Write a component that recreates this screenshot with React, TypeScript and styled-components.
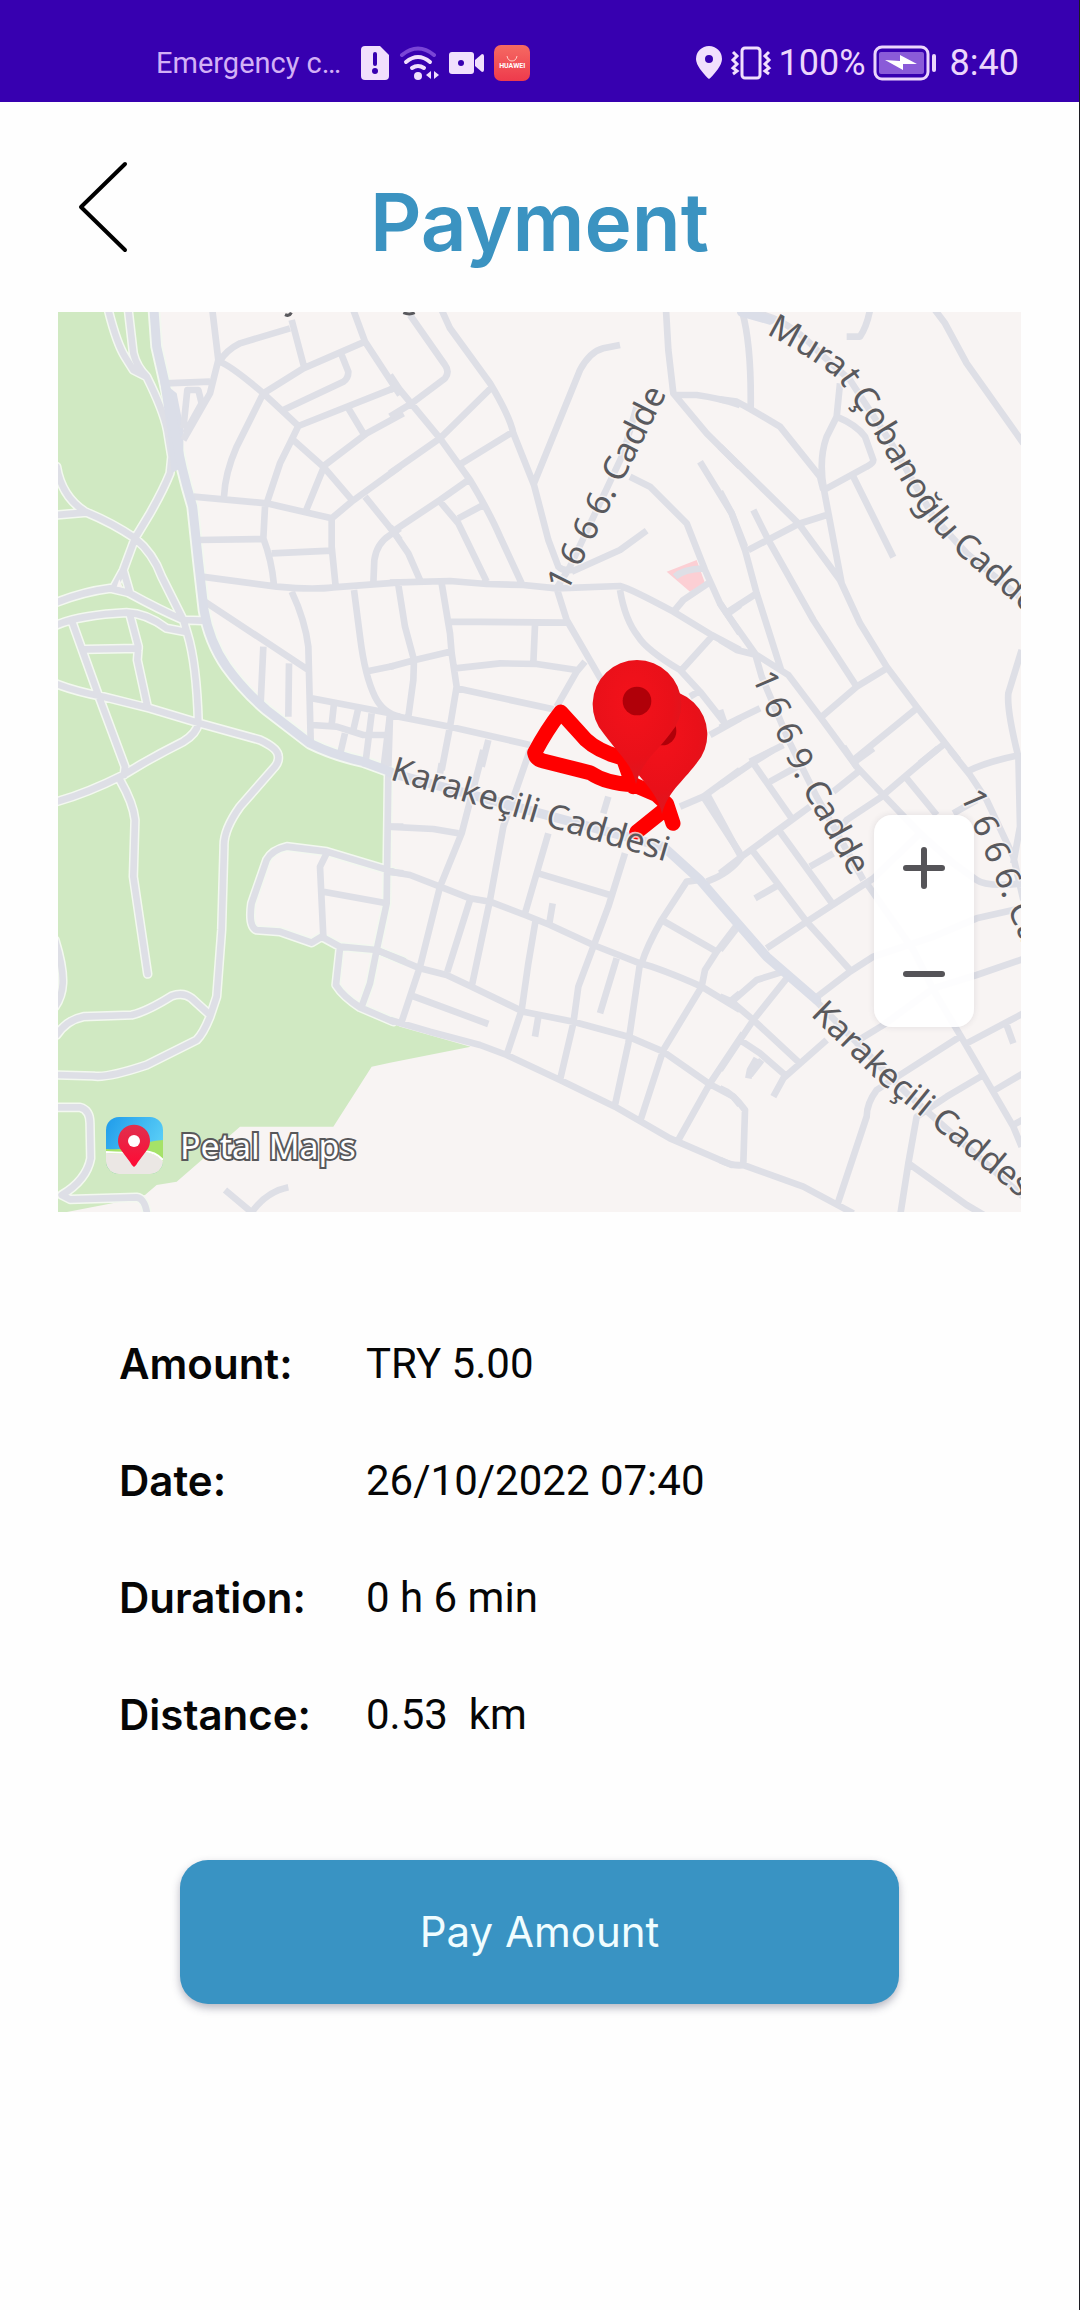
import React from "react";
import styled, { createGlobalStyle } from "styled-components";

const GlobalStyle = createGlobalStyle`
  *, *::before, *::after { box-sizing: border-box; }
  body {
    margin: 0;
    background: #fefefe;
    color: #060606;
    font-family: Roboto, "Noto Sans", "Liberation Sans", sans-serif;
  }
`;

const Screen = styled.div`
  min-height: 100vh;
  display: flex;
  flex-direction: column;
  border-right: 1px solid #1c1c22;
`;

const StatusBar = styled.div`
  display: flex;
  align-items: center;
  justify-content: space-between;
  height: 102px;
  padding: 24px 60px 0 156px;
  background: #3700b0;
  color: #ecd6fc;
`;

const StatusGroup = styled.div<{ $gap: number }>`
  display: flex;
  align-items: center;
  gap: ${(p) => p.$gap}px;
`;

const Carrier = styled.span`
  margin-right: 10px;
  font-size: 29px;
  line-height: 36px;
  color: #d3b0f6;
`;

const StatusText = styled.span`
  font-size: 36px;
  line-height: 40px;
`;

const Clock = styled(StatusText)`
  margin-left: 6px;
`;

const Header = styled.header`
  display: grid;
  grid-template-columns: 1fr auto 1fr;
  align-items: start;
  padding: 50px 60px 0;
  height: 210px;
`;

const BackButton = styled.button`
  justify-self: start;
  display: grid;
  place-items: center;
  width: 86px;
  height: 110px;
  padding: 0;
  border: 0;
  background: none;
  color: #000;
`;

const Title = styled.h1`
  margin: 20px 0 0;
  font-family: Inter, Roboto, sans-serif;
  font-size: 80px;
  line-height: 100px;
  font-weight: 600;
  color: #3b93c1;
`;

const MapPanel = styled.section`
  position: relative;
  height: 900px;
  margin: 0 58px;
  overflow: hidden;
  background: #f8f4f3;
`;

const MapCanvas = styled.svg`
  display: block;
  width: 100%;
  height: 100%;
`;

const ZoomControl = styled.div`
  position: absolute;
  right: 47px;
  bottom: 185px;
  display: flex;
  flex-direction: column;
  width: 100px;
  border-radius: 18px;
  background: rgba(255, 255, 255, 0.93);
  box-shadow: 0 0 6px rgba(60, 60, 80, 0.12);
`;

const ZoomButton = styled.button`
  display: grid;
  place-items: center;
  height: 106px;
  padding: 0;
  border: 0;
  background: none;
  color: #555458;
`;

const Attribution = styled.div`
  position: absolute;
  left: 48px;
  bottom: 38px;
  display: flex;
  align-items: center;
  gap: 17px;
  font-family: "Noto Sans", sans-serif;
  font-size: 34px;
  line-height: 40px;
  color: #fff;
  -webkit-text-stroke: 4px #58585a;
  paint-order: stroke fill;
`;

const Details = styled.dl`
  display: grid;
  grid-template-columns: 247px 1fr;
  row-gap: 67px;
  margin: 127px 60px 0 119px;
  font-size: 42px;
  line-height: 50px;
`;

const Term = styled.dt`
  font-family: Inter, Roboto, sans-serif;
  font-weight: 600;
`;

const Value = styled.dd`
  margin: 0;
  white-space: pre;
`;

const PayRow = styled.div`
  display: grid;
  padding: 120px 180px 0;
`;

const PayButton = styled.button`
  padding: 46px 24px;
  border: 0;
  border-radius: 28px;
  background: #3993c3;
  box-shadow: 0 4px 8px rgba(50, 50, 80, 0.35);
  color: #f0fdff;
  font-family: Inter, Roboto, sans-serif;
  font-size: 42px;
  line-height: 52px;
`;

type Streets = { x: number; y: number; d: string };

/* The canvas is cut into six tiles; each lists its streets from its own corner. */
const tiles: Streets[] = [
  {
    x: 150,
    y: 900,
    d: `M487,30L505,180L480,280L400,420M345,250L480,245M400,385L412,270L445,270L455,310L405,400
M720,85L570,130Q530,150 508,185M725,60L762,200M910,30L945,125L1050,285M945,125L760,205L640,280
M508,185Q540,195 640,280L710,345L745,378M875,165L895,215Q895,235 880,245L700,330M745,378L1030,265
M895,325L940,400M1060,340L950,400L825,495M745,378Q720,430 690,490L650,610
M640,280L560,440Q525,520 522,590M730,420L820,500L910,605M1050,500L905,605L845,655M820,505L768,632
M430,590L650,610L845,655L845,740L857,860M645,620L640,715Q665,780 672,855M445,720L640,717
M665,760L845,752M455,830L680,860Q790,870 850,862L1050,847M945,590L1050,720
M1050,685L1020,705Q980,730 973,780L970,850M725,875Q765,960 775,1040L782,1320M465,905L775,1110
M640,1040L632,1210M717,1090L715,1250M912,870L930,1010Q945,1130 975,1190Q1000,1240 1050,1250
M945,1115L1030,1098M785,1195L1020,1240M852,1210L845,1275M925,1225L910,1290M965,1240L945,1400
M1020,1245L1000,1410M785,1275L860,1280L940,1305L1015,1305M885,1300L872,1355`,
  },
  {
    x: 1170,
    y: 900,
    d: `M60,45L165,195Q180,215 165,235L65,310L0,350M155,30L180,85L300,250Q360,350 370,400L432,555L475,720L505,800Q520,815 545,810
M0,225L30,270L150,415L240,540Q300,640 330,710L395,850M0,270L15,262M305,262L150,415L0,520M370,395L215,490
M432,550L570,210Q600,155 640,145L690,135M235,540L150,600L15,690L0,690M150,605L205,670L290,845M205,655L280,615
M0,680L55,760L90,840M0,848L180,843L290,852L400,855L500,865L690,858Q720,865 850,935L965,1005L1050,1050
M500,865L540,800L700,460L740,320M545,815L590,795L690,750L770,692M720,530L780,560L890,670L945,810L990,910L1050,1000
M828,30L835,150L850,280L950,400L1050,500M850,285L920,285Q990,295 1050,315M930,485L1025,640L1065,740
M855,830Q880,808 940,805M955,850L880,900L855,930M1015,940L1050,915M25,855L45,980L72,1080L70,1140L55,1250
M155,850L180,1000L185,1060L200,1160L180,1280L155,1410M180,965L530,968M435,975L430,1090M0,1100L75,1080L180,1055
M195,1105L330,1090L440,1092L560,1110M500,865L530,960L640,1150M585,1085L560,1115L500,1220M200,1165L490,1228
M0,1245L180,1280L420,1335M295,1320L275,1400M690,870Q705,960 745,1010Q770,1050 870,1110L930,1175L1005,1270
M965,1010L870,1115M960,1305L1050,1255M900,1190L925,1175M0,1250L-5,1400`,
  },
  {
    x: 2160,
    y: 900,
    d: `M65,30Q95,130 92,330M90,36Q200,50 300,160L390,240L520,440L640,650L740,760L910,900M0,298L50,305Q90,325 180,380L300,530L310,570
M380,110L420,110Q440,80 450,30M645,30L675,70L740,190L910,430M360,250L350,350L320,410Q295,480 312,570L365,850
M350,350Q410,375 435,410L460,480Q460,490 440,500L315,568M400,530L520,772
M0,440L235,670L360,840L420,970L500,1100L590,1220L715,1380M320,645L235,672L85,750M100,630L145,720L280,960L410,1160
M0,575L35,640L75,750L110,880L185,1115M110,880L25,935M0,910L20,940L105,1060L125,1130L210,1330L290,1490L430,1740
M0,1020L50,1050L110,1065L205,1125L300,1250L410,1400M500,1105L410,1160L305,1250M590,1225L400,1380M675,1330L600,1390
M905,1050L865,1180Q860,1230 895,1370M0,1230L15,1275M0,1283L120,1225M90,1385L190,1335M740,1415Q800,1385 900,1365`,
  },
  {
    x: 150,
    y: 2250,
    d: `M830,310L810,350L820,560M820,425L1010,460M1020,230L1060,230M1010,365L1060,370M525,1320L605,1387Q650,1325 715,1312`,
  },
  {
    x: 1170,
    y: 2250,
    d: `M-10,230L130,237L205,250M280,0L215,250L150,410L90,650L35,815M420,0L340,230L300,450L245,710M155,40L150,70
M475,250L405,490M445,370L660,435M655,140L640,190M705,310L655,470L610,590L565,710L550,820L510,990
M-15,362L60,375L150,410L240,445L300,455L405,495L480,525L610,585L750,640Q810,655 935,710L1050,780
M240,450L172,665M488,460L478,520M437,510L415,640L395,780L350,915M680,625L630,790
M-40,600L90,655L170,675L245,710L400,785L550,815L715,860L820,905L955,1000L1030,1040L1050,1065
M60,735L295,822M445,800L435,860M0,810L120,845L270,885L350,915L510,990L675,1070L840,1165L1025,1245L1060,1245
M750,640L715,880L675,1065M930,390L890,395L815,510Q770,590 755,640M815,510L980,605
M1045,520L980,605L945,660L935,710L820,900L750,1115M1060,850L960,1000L865,1170M1020,755L1050,730
M870,170L940,140L1050,60M940,140L1050,310M950,395Q1020,370 1055,320`,
  },
  {
    x: 2160,
    y: 2250,
    d: `M370,-10L410,50L490,135L600,250L700,340L770,390Q800,412 910,400M0,105L95,40L160,0M100,40L215,205M150,95L240,45
M415,65L340,125M460,-5L405,35M485,140L380,210L340,260M0,370L65,320L215,210L270,170M-40,130L60,315
M100,305L260,515L395,665M180,245L340,465M270,350L340,310M105,445L175,405M490,135L560,75L655,-5
M560,85L650,195M690,0L750,75L800,150L880,320L910,450M895,10L900,230L880,340M700,190L770,150
M285,745L390,665L460,620L640,560L770,505L890,478M140,595L260,515L460,385L600,250M440,400L580,600L640,720L735,880L880,1130L905,1190
M910,627L770,675L640,715L490,825L400,880M910,790L740,880M860,825L880,880
M720,860L540,975L470,1020Q440,1060 440,1100L350,1370M790,975L680,1040L590,1100L565,1240L540,1400
M565,1240L740,1365L800,1400M825,1020L910,970M880,1125L910,1108M285,750L560,1030L910,1340
M50,535L0,600M190,665L110,690L35,755M200,685L100,810L0,960M0,740L35,755L100,810L240,940
M320,870L190,985L160,1040M60,870L120,910L195,975M0,1015Q40,1030 75,1080L70,1240
M0,1230Q40,1250 70,1245L250,1310L400,1390M110,925L90,960L85,985M125,930L90,975`,
  },
];

const parkPaths = `M175,30Q200,130 225,170L250,210L290,230Q340,330 352,390L365,470L360,520Q340,570 300,640L255,715L220,810L190,865
M235,30L250,160Q260,200 290,230M20,500Q35,590 105,635Q190,670 255,715Q310,760 335,830L400,960L412,1000Q440,1090 445,1270
M20,645L110,637M20,907Q100,875 180,865L235,878Q330,930 400,960L455,962M220,810L240,880
M20,975Q90,945 230,938Q290,940 350,985L405,995M68,970L145,1185L225,1400L222,1425M240,945L265,1040L262,1080L292,1218
M105,1048L265,1045M20,1152Q80,1175 160,1190L300,1225L450,1270L630,1320Q685,1345 685,1370Q687,1385 675,1400L570,1520
Q520,1590 522,1640L515,1890L500,2090L480,2150Q460,2200 440,2220L290,2295Q170,2335 130,2328L20,2325
M445,1270Q440,1300 400,1325Q330,1360 270,1395L220,1425Q110,1480 20,1505M210,1440Q250,1510 255,1560L250,1730L293,2022
M20,2205Q50,2160 100,2150L245,2145Q290,2135 365,2088Q400,2075 425,2095L480,2145
M15,1920Q40,2000 38,2050Q36,2090 15,2120M20,2422L90,2422Q120,2430 120,2470L122,2575Q110,2640 35,2685L60,2698L260,2692Q285,2695 292,2745
M1030,1715Q880,1670 830,1655L710,1640Q665,1650 650,1680L605,1810Q595,1880 620,1890L690,1895L785,1928L815,1910L870,1940L980,1950L1060,1982
M870,1945L858,2055Q880,2090 930,2122L1030,2165M1015,1430L1010,1810L980,1950L960,2050L935,2120`;

const mainRoad = `M312,30L320,140L345,250L378,410Q392,500 428,620L445,780L462,930Q478,1025 530,1100Q580,1170 650,1230
L780,1330Q850,1365 940,1385L1022,1415`;

const streetLabels = [
  { id: "murat", text: "Murat Çobanoğlu Caddesi", d: "M2298,1002Q2450,1080 2520,1145Q2580,1230 2640,1330L2730,1490Q2780,1570 2860,1650L3150,1900" },
  { id: "c1666", text: "1 6 6 6. Cadde", d: "M1700,1780L1890,1400L2040,1100" },
  { id: "c1669", text: "1 6 6 9. Cadde", d: "M2255,2030L2380,2320L2625,2760" },
  { id: "east", text: "1 6 6 6. Cadde", d: "M2880,2385L2946,2540L3120,2960" },
  { id: "kara1", text: "Karakeçili Caddesi", d: "M1168,2338L1600,2467L2050,2600" },
  { id: "kara2", text: "Karakeçili Caddesi", d: "M2430,3045L2640,3250L2800,3380L3200,3710" },
];

const pinShape =
  "M408,462C398,405 355,370 312,312A133,133 0 1 1 510,312C470,365 422,400 408,462Z";

function StreetMap() {
  return (
    <MapCanvas viewBox="174 936 2889 2700" preserveAspectRatio="xMinYMin slice" role="img" aria-label="Trip route">
      <defs>
        <radialGradient id="pin" cx="45%" cy="35%" r="75%">
          <stop offset="0" stopColor="#f4121b" />
          <stop offset="0.6" stopColor="#e91019" />
          <stop offset="1" stopColor="#d61a22" />
        </radialGradient>
        <path id="park-paths" d={parkPaths} />
        <path id="main-road" d={mainRoad} />
        {streetLabels.map((l) => (
          <path key={l.id} id={l.id} d={l.d} />
        ))}
      </defs>
      <rect x="174" y="936" width="2889" height="2700" fill="#f8f4f3" />
      <path
        fill="#d0e9c2"
        transform="translate(150 900)"
        d="M20,30H300L310,140L335,240L385,440L430,600L450,850L470,960L510,1080L590,1190L780,1330L1010,1430V1705L830,1655L710,1640L650,1680L605,1810L605,1880L690,1895L785,1928L815,1910L870,1940L858,2055L930,2122L1050,2180L1262,2240L1020,2288L965,2300L850,2480H570L380,2645L320,2655L285,2685L210,2705L20,2742Z"
      />
      <path fill="#fccfd4" d="M2000,1715L2090,1680L2115,1750L2070,1775Z" />
      <g fill="none" strokeLinecap="round" strokeLinejoin="round">
        <g transform="translate(150 900)" stroke="#f3f8f0">
          <use href="#park-paths" strokeWidth="29" />
          <use href="#main-road" strokeWidth="38" />
        </g>
        <g stroke="#dedfe6" strokeWidth="20">
          <g transform="translate(150 900)">
            <use href="#park-paths" />
            <path fill="#dbdee8" stroke="none" d="M330,240L380,280L400,380L400,500L365,520L352,390Z" />
            <path fill="#f8f4f3" stroke="none" d="M200,860L208,838L218,862Z" />
          </g>
          {tiles.map((t) => (
            <path key={`${t.x}-${t.y}`} transform={`translate(${t.x} ${t.y})`} d={t.d} strokeLinecap="butt" />
          ))}
        </g>
        <use href="#main-road" transform="translate(150 900)" stroke="#dbdee8" strokeWidth="27" />
        <path
          stroke="#dbdee8"
          strokeWidth="28"
          d="M1170,2318L1990,2540L2100,2640L2160,2710L2300,2870L2450,3000M2225,936L2310,960"
        />
        <g transform="translate(1500 1890)">
          <path
            stroke="#ff0000"
            strokeWidth="45"
            d="M400,470L370,385L330,372Q270,350 240,310L182,246Q140,300 104,368Q108,388 130,393L270,428Q320,462 400,464L470,494L500,522L519,580M490,542L410,606"
          />
        </g>
      </g>
      <g transform="translate(1500 1890)">
        <g transform="translate(78 90)">
          <path d={pinShape} fill="url(#pin)" />
          <circle cx="408" cy="213" r="43" fill="#b00009" />
        </g>
        <path d={pinShape} fill="url(#pin)" />
        <circle cx="411" cy="213" r="43" fill="#b00009" />
      </g>
      <g
        fill="#59595d"
        stroke="#f8f4f3"
        strokeWidth="10"
        strokeOpacity="0.75"
        strokeLinejoin="round"
        paintOrder="stroke"
        fontSize="102"
        fontFamily='"Noto Sans", "Open Sans", sans-serif'
      >
        {streetLabels.map((l) => (
          <text key={l.id}>
            <textPath href={`#${l.id}`}>{l.text}</textPath>
          </text>
        ))}
      </g>
      <path d="M855,944Q868,950 874,938M1210,938Q1228,946 1244,938" fill="none" stroke="#59595d" strokeWidth="9" />
    </MapCanvas>
  );
}

const details = [
  ["Amount:", "TRY 5.00"],
  ["Date:", "26/10/2022 07:40"],
  ["Duration:", "0 h 6 min"],
  ["Distance:", "0.53  km"],
];

function PetalLogo() {
  return (
    <svg width="57" height="57" viewBox="0 0 57 57" aria-hidden="true">
      <defs>
        <clipPath id="petal-clip">
          <rect width="57" height="57" rx="13" />
        </clipPath>
        <linearGradient id="petal-sky" x1="0" y1="0" x2="1" y2="0.6">
          <stop offset="0" stopColor="#1f9bea" />
          <stop offset="1" stopColor="#5fd3f8" />
        </linearGradient>
        <linearGradient id="petal-pin" x1="0" y1="0" x2="0" y2="1">
          <stop offset="0" stopColor="#e0304e" />
          <stop offset="1" stopColor="#ff0a34" />
        </linearGradient>
      </defs>
      <g clipPath="url(#petal-clip)">
        <rect width="57" height="57" fill="url(#petal-sky)" />
        <path d="M0,32Q16,33 28,30Q42,24 57,23V57H0Z" fill="#a5e268" />
        <path d="M0,36Q24,38 38,35Q50,36 57,44V57H0Z" fill="#ebe7e4" />
        <path d="M0,35Q24,37 38,34Q50,35 57,43" stroke="#fff" strokeWidth="2" fill="none" />
        <path d="M28,50Q26,49 24,45L15,33A16,16 0 1 1 41,33L32,45Q30,49 28,50Z" fill="url(#petal-pin)" />
        <circle cx="28" cy="24" r="6" fill="#fff" />
      </g>
    </svg>
  );
}

function SimAlertIcon() {
  return (
    <svg width="28" height="34" viewBox="0 0 28 34" aria-hidden="true">
      <path d="M4,0H19L28,9V30Q28,34 24,34H4Q0,34 0,30V4Q0,0 4,0Z" fill="#f1dffd" />
      <path d="M14,8V18" stroke="#3700b0" strokeWidth="4" strokeLinecap="round" />
      <circle cx="14" cy="25" r="3" fill="#3700b0" />
    </svg>
  );
}

function WifiIcon() {
  return (
    <svg width="40" height="34" viewBox="0 0 40 34" fill="none" strokeWidth="4" strokeLinecap="round" aria-hidden="true">
      <path d="M3,9Q19,-4 35,9" stroke="#7a45d6" />
      <path d="M7,16Q19,6 31,16" stroke="#f1dffd" />
      <path d="M13,22Q19,18 25,22" stroke="#f1dffd" />
      <circle cx="19" cy="30" r="4" fill="#f1dffd" />
      <path d="M32,25V33L27,29ZM35,25V33L40,29Z" fill="#f1dffd" />
    </svg>
  );
}

function CameraIcon() {
  return (
    <svg width="35" height="22" viewBox="0 0 35 22" aria-hidden="true">
      <rect width="25" height="22" rx="3" fill="#f1dffd" />
      <path d="M26,8L33,2Q35,2 35,4V18Q35,20 33,20L26,14Z" fill="#f1dffd" />
      <circle cx="12" cy="11" r="3" fill="#3700b0" />
    </svg>
  );
}

const StoreBadge = styled.span`
  display: flex;
  flex-direction: column;
  align-items: center;
  justify-content: center;
  width: 36px;
  height: 36px;
  border-radius: 7px;
  background: linear-gradient(#f56a62, #ee3a4c);
  color: #fff;
  font-size: 7px;
  line-height: 9px;
  font-weight: 700;
`;

export default function App() {
  return (
    <Screen>
      <GlobalStyle />
      <StatusBar>
        <StatusGroup $gap={10}>
          <Carrier>Emergency c…</Carrier>
          <SimAlertIcon />
          <WifiIcon />
          <CameraIcon />
          <StoreBadge>
            <svg width="12" height="7" viewBox="0 0 12 7" aria-hidden="true">
              <path d="M1,1Q2,6 6,6Q10,6 11,1" fill="none" stroke="#ffd0c8" strokeWidth="1" />
            </svg>
            HUAWEI
          </StoreBadge>
        </StatusGroup>
        <StatusGroup $gap={7}>
          <svg width="28" height="34" viewBox="0 0 28 34" aria-hidden="true">
            <path
              d="M14,33Q12,32 5,23Q1,17 1,13A13,13 0 0 1 27,13Q27,17 23,23Q16,32 14,33ZM14,9A4,4 0 1 0 14,17A4,4 0 1 0 14,9Z"
              fill="#f1dffd"
              fillRule="evenodd"
            />
          </svg>
          <svg width="42" height="34" viewBox="0 0 42 34" fill="none" stroke="#f1dffd" strokeWidth="3" aria-hidden="true">
            <rect x="12" y="2" width="18" height="30" rx="3" />
            <path d="M3,6L7,10L3,14L7,18L3,22L7,25L3,28M39,6L35,10L39,14L35,18L39,22L35,25L39,28" />
          </svg>
          <StatusText>100%</StatusText>
          <svg width="64" height="36" viewBox="0 0 64 36" aria-hidden="true">
            <rect x="2" y="2" width="53" height="32" rx="7" fill="none" stroke="#ecd6fc" strokeWidth="3" />
            <rect x="6" y="7" width="45" height="22" rx="2" fill="#8a5bd8" />
            <path d="M12,15L27,16L27,10L44,19L30,19L30,25Z" fill="#fff" />
            <rect x="59" y="9" width="4" height="18" rx="2" fill="#ecd6fc" />
          </svg>
          <Clock>8:40</Clock>
        </StatusGroup>
      </StatusBar>

      <Header>
        <BackButton type="button" aria-label="Back">
          <svg width="50" height="92" viewBox="0 0 50 92" fill="none" aria-hidden="true">
            <path d="M47,3L3,46L47,89" stroke="currentColor" strokeWidth="4" strokeLinecap="round" strokeLinejoin="round" />
          </svg>
        </BackButton>
        <Title>Payment</Title>
      </Header>

      <main>
        <MapPanel>
          <StreetMap />
          <ZoomControl>
            <ZoomButton type="button" aria-label="Zoom in">
              <svg width="42" height="42" viewBox="0 0 42 42" aria-hidden="true">
                <path d="M3,21H39M21,3V39" stroke="currentColor" strokeWidth="6" strokeLinecap="round" />
              </svg>
            </ZoomButton>
            <ZoomButton type="button" aria-label="Zoom out">
              <svg width="42" height="42" viewBox="0 0 42 42" aria-hidden="true">
                <path d="M3,21H39" stroke="currentColor" strokeWidth="6" strokeLinecap="round" />
              </svg>
            </ZoomButton>
          </ZoomControl>
          <Attribution>
            <PetalLogo />
            <span>Petal Maps</span>
          </Attribution>
        </MapPanel>

        <Details>
          {details.map(([term, value]) => (
            <React.Fragment key={term}>
              <Term>{term}</Term>
              <Value>{value}</Value>
            </React.Fragment>
          ))}
        </Details>

        <PayRow>
          <PayButton type="button">Pay Amount</PayButton>
        </PayRow>
      </main>
    </Screen>
  );
}
